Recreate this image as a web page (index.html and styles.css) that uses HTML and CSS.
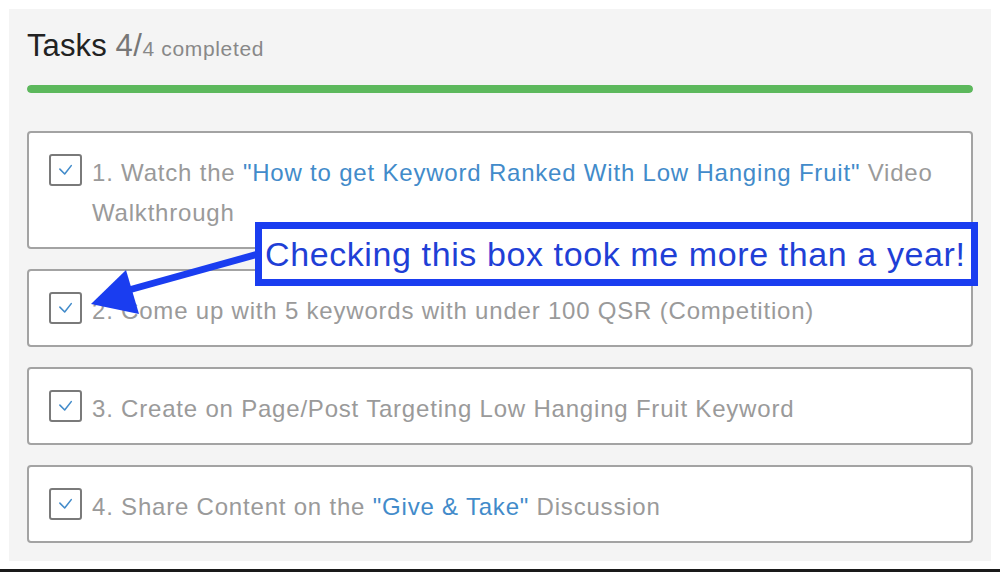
FILE: index.html
```html
<!DOCTYPE html>
<html>
<head>
<meta charset="utf-8">
<link rel="stylesheet" href="styles.css">
</head>
<body>
<div class="page">
  <div class="panel">
    <h1 class="title">Tasks <span class="count">4/</span><span class="small">4 completed</span></h1>
    <div class="progress"><div class="progress-fill"></div></div>
    <div class="tasks">
      <div class="task">
        <span class="check"><svg viewBox="0 0 32 32" width="28" height="28"><path d="M9 15 L14.5 20.5 L22 11" fill="none" stroke="#428bca" stroke-width="1.8" stroke-linecap="round" stroke-linejoin="round"/></svg></span>
        <p class="label">1. Watch the <span class="link">"How to get Keyword Ranked With Low Hanging Fruit"</span> Video Walkthrough</p>
      </div>
      <div class="task">
        <span class="check"><svg viewBox="0 0 32 32" width="28" height="28"><path d="M9 15 L14.5 20.5 L22 11" fill="none" stroke="#428bca" stroke-width="1.8" stroke-linecap="round" stroke-linejoin="round"/></svg></span>
        <p class="label">2. Come up with 5 keywords with under 100 QSR (Competition)</p>
      </div>
      <div class="task">
        <span class="check"><svg viewBox="0 0 32 32" width="28" height="28"><path d="M9 15 L14.5 20.5 L22 11" fill="none" stroke="#428bca" stroke-width="1.8" stroke-linecap="round" stroke-linejoin="round"/></svg></span>
        <p class="label">3. Create on Page/Post Targeting Low Hanging Fruit Keyword</p>
      </div>
      <div class="task">
        <span class="check"><svg viewBox="0 0 32 32" width="28" height="28"><path d="M9 15 L14.5 20.5 L22 11" fill="none" stroke="#428bca" stroke-width="1.8" stroke-linecap="round" stroke-linejoin="round"/></svg></span>
        <p class="label">4. Share Content on the <span class="link">"Give &amp; Take"</span> Discussion</p>
      </div>
    </div>
  </div>
  <div class="bottom-line"></div>
  <svg class="arrow" width="1000" height="572" viewBox="0 0 1000 572">
    <line x1="262" y1="253" x2="118" y2="293" stroke="#1a3df0" stroke-width="7"/>
    <polygon points="91,304 126,270 139,314" fill="#1a3df0"/>
  </svg>
  <div class="callout">Checking this box took me more than a year!</div>
</div>
</body>
</html>
```
FILE: styles.css
```css
* { box-sizing: border-box; }
html, body { margin: 0; padding: 0; background: #fff; }
body { font-family: "Liberation Sans", Arial, sans-serif; }
.page { position: relative; width: 1000px; height: 572px; overflow: hidden; padding-top: 9px; }
.panel {
  margin: 0 9px;
  height: 552px;
  background: #f4f4f4;
  padding: 18px;
}
.title {
  margin: 0;
  font-weight: normal;
  font-size: 31px;
  line-height: 38px;
  color: #222;
  letter-spacing: 0.1px;
}
.count { color: #777; letter-spacing: 0.6px; }
.small { color: #888; font-size: 21px; letter-spacing: 0.65px; }
.progress {
  margin-top: 17px;
  height: 8px;
  border-radius: 4px;
  background: #e6e6e6;
  overflow: hidden;
}
.progress-fill { width: 100%; height: 100%; background: #5cb85c; border-radius: 4px; }
.tasks {
  margin-top: 38px;
  display: flex;
  flex-direction: column;
  gap: 20px;
}
.task {
  background: #fff;
  border: 2px solid #a3a3a3;
  border-radius: 4px;
  padding: 20px 20px 14px 20px;
  display: flex;
  align-items: flex-start;
  gap: 10px;
}
.check {
  flex: none;
  width: 33px;
  height: 32px;
  margin-top: 1px;
  border: 2px solid #7a7a7a;
  border-radius: 3px;
  display: flex;
  align-items: center;
  justify-content: center;
  background: #fff;
}
.label {
  margin: 0;
  font-size: 24px;
  line-height: 40px;
  letter-spacing: 0.8px;
  color: #9a9a9a;
}
.link { color: #428bca; }
.bottom-line {
  position: absolute;
  left: 0; right: 0; top: 569px;
  height: 3px;
  background: #1a1a1a;
}
.arrow { position: absolute; left: 0; top: 0; pointer-events: none; }
.callout {
  position: absolute;
  left: 255px;
  top: 222px;
  width: 723px;
  height: 64px;
  border: 7px solid #1a3df0;
  background: #fff;
  color: #1f3fd6;
  font-size: 34px;
  line-height: 50px;
  letter-spacing: 0.6px;
  padding-left: 3px;
  white-space: nowrap;
}
```
